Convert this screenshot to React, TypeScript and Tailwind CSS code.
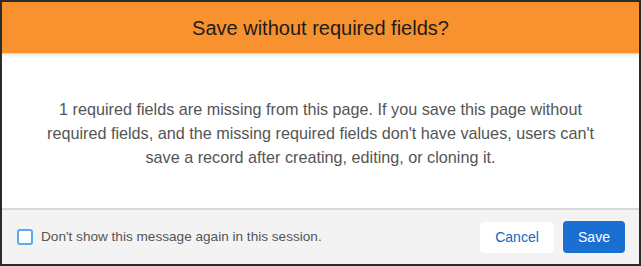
export default function App() {
  return (
    <div className="w-[641px] h-[266px] border-2 border-[#2b2b2b] bg-white flex flex-col font-['Liberation_Sans',Arial,sans-serif] overflow-hidden">
      {/* Header */}
      <header className="h-[52px] shrink-0 bg-[#f8922f] flex items-center justify-center border-b border-[#e0d6cc] shadow-[0_2px_2px_rgba(0,0,0,0.08)]">
        <h2 className="text-[20px] text-[#1c1c1c]">Save without required fields?</h2>
      </header>

      {/* Body */}
      <main className="flex-1 flex items-center justify-center px-6 pt-[3px]">
        <p className="text-[16.2px] leading-[24px] text-[#555] text-center whitespace-nowrap">
          1 required fields are missing from this page. If you save this page without
          <br />
          required fields, and the missing required fields don't have values, users can't
          <br />
          save a record after creating, editing, or cloning it.
        </p>
      </main>

      {/* Footer */}
      <footer className="h-[56px] shrink-0 bg-[#f3f3f3] border-t-2 border-[#d8d8d8] flex items-center justify-between pl-[15px] pr-[14px]">
        <label className="flex items-center gap-[8px]">
          <span className="w-[16px] h-[16px] rounded-[3px] border-2 border-[#5aa9f2] bg-white" />
          <span className="text-[13.6px] text-[#555]">Don't show this message again in this session.</span>
        </label>
        <div className="flex items-center gap-[9px]">
          <button className="h-[31px] w-[74px] bg-white rounded-[4px] text-[14px] text-[#0b6bbf]">Cancel</button>
          <button className="h-[32px] w-[62px] bg-[#1a6fd2] rounded-[4px] text-[14px] text-white">Save</button>
        </div>
      </footer>
    </div>
  );
}
